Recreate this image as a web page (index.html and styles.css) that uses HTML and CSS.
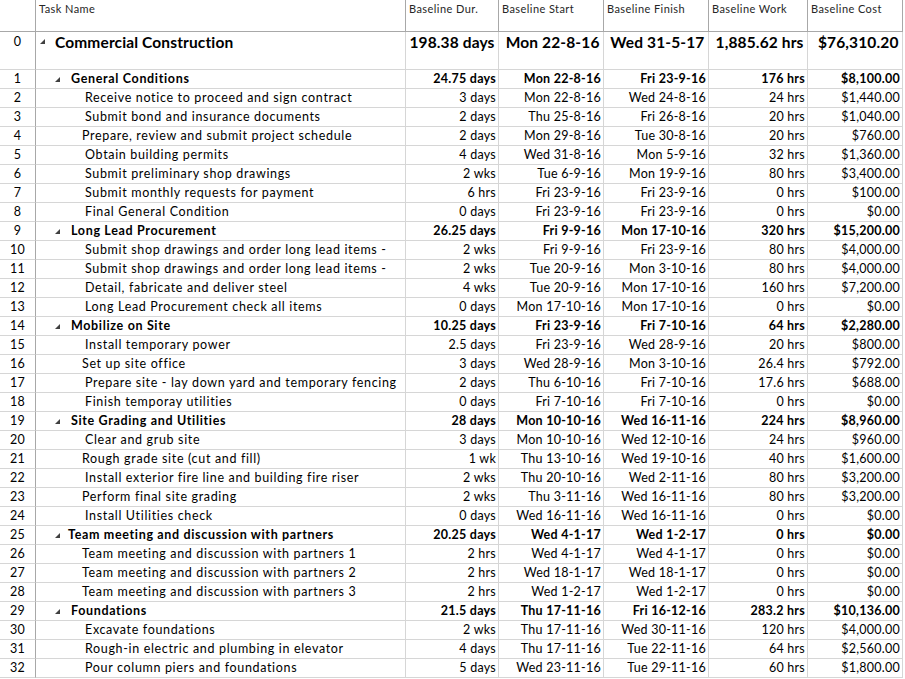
FILE: index.html
```html
<!DOCTYPE html>
<html>
<head>
<meta charset="utf-8">
<link rel="stylesheet" href="styles.css">
</head>
<body>
<div class="sheet">
  <div class="row head">
    <div class="cell c-id"></div>
    <div class="cell c-name">Task Name</div>
    <div class="cell c-dur">Baseline Dur.</div>
    <div class="cell c-start">Baseline Start</div>
    <div class="cell c-fin">Baseline Finish</div>
    <div class="cell c-work">Baseline Work</div>
    <div class="cell c-cost">Baseline Cost</div>
  </div>

  <div class="row top">
    <div class="cell c-id">0</div>
    <div class="cell c-name l0"><svg class="tri" width="5" height="5" viewBox="0 0 5 5"><path d="M5 0V5H0Z"/></svg><span>Commercial Construction</span></div>
    <div class="cell c-dur num">198.38 days</div>
    <div class="cell c-start num">Mon 22-8-16</div>
    <div class="cell c-fin num">Wed 31-5-17</div>
    <div class="cell c-work num">1,885.62 hrs</div>
    <div class="cell c-cost num">$76,310.20</div>
  </div>

  <div class="row sum">
    <div class="cell c-id">1</div>
    <div class="cell c-name l1"><svg class="tri" width="5" height="5" viewBox="0 0 5 5"><path d="M5 0V5H0Z"/></svg><span>General Conditions</span></div>
    <div class="cell c-dur num">24.75 days</div>
    <div class="cell c-start num">Mon 22-8-16</div>
    <div class="cell c-fin num">Fri 23-9-16</div>
    <div class="cell c-work num">176 hrs</div>
    <div class="cell c-cost num">$8,100.00</div>
  </div>
  <div class="row">
    <div class="cell c-id">2</div>
    <div class="cell c-name l2">Receive notice to proceed and sign contract</div>
    <div class="cell c-dur num">3 days</div>
    <div class="cell c-start num">Mon 22-8-16</div>
    <div class="cell c-fin num">Wed 24-8-16</div>
    <div class="cell c-work num">24 hrs</div>
    <div class="cell c-cost num">$1,440.00</div>
  </div>
  <div class="row">
    <div class="cell c-id">3</div>
    <div class="cell c-name l2">Submit bond and insurance documents</div>
    <div class="cell c-dur num">2 days</div>
    <div class="cell c-start num">Thu 25-8-16</div>
    <div class="cell c-fin num">Fri 26-8-16</div>
    <div class="cell c-work num">20 hrs</div>
    <div class="cell c-cost num">$1,040.00</div>
  </div>
  <div class="row">
    <div class="cell c-id">4</div>
    <div class="cell c-name l2n">Prepare, review and submit project schedule</div>
    <div class="cell c-dur num">2 days</div>
    <div class="cell c-start num">Mon 29-8-16</div>
    <div class="cell c-fin num">Tue 30-8-16</div>
    <div class="cell c-work num">20 hrs</div>
    <div class="cell c-cost num">$760.00</div>
  </div>
  <div class="row">
    <div class="cell c-id">5</div>
    <div class="cell c-name l2">Obtain building permits</div>
    <div class="cell c-dur num">4 days</div>
    <div class="cell c-start num">Wed 31-8-16</div>
    <div class="cell c-fin num">Mon 5-9-16</div>
    <div class="cell c-work num">32 hrs</div>
    <div class="cell c-cost num">$1,360.00</div>
  </div>
  <div class="row">
    <div class="cell c-id">6</div>
    <div class="cell c-name l2">Submit preliminary shop drawings</div>
    <div class="cell c-dur num">2 wks</div>
    <div class="cell c-start num">Tue 6-9-16</div>
    <div class="cell c-fin num">Mon 19-9-16</div>
    <div class="cell c-work num">80 hrs</div>
    <div class="cell c-cost num">$3,400.00</div>
  </div>
  <div class="row">
    <div class="cell c-id">7</div>
    <div class="cell c-name l2">Submit monthly requests for payment</div>
    <div class="cell c-dur num">6 hrs</div>
    <div class="cell c-start num">Fri 23-9-16</div>
    <div class="cell c-fin num">Fri 23-9-16</div>
    <div class="cell c-work num">0 hrs</div>
    <div class="cell c-cost num">$100.00</div>
  </div>
  <div class="row">
    <div class="cell c-id">8</div>
    <div class="cell c-name l2">Final General Condition</div>
    <div class="cell c-dur num">0 days</div>
    <div class="cell c-start num">Fri 23-9-16</div>
    <div class="cell c-fin num">Fri 23-9-16</div>
    <div class="cell c-work num">0 hrs</div>
    <div class="cell c-cost num">$0.00</div>
  </div>

  <div class="row sum">
    <div class="cell c-id">9</div>
    <div class="cell c-name l1"><svg class="tri" width="5" height="5" viewBox="0 0 5 5"><path d="M5 0V5H0Z"/></svg><span>Long Lead Procurement</span></div>
    <div class="cell c-dur num">26.25 days</div>
    <div class="cell c-start num">Fri 9-9-16</div>
    <div class="cell c-fin num">Mon 17-10-16</div>
    <div class="cell c-work num">320 hrs</div>
    <div class="cell c-cost num">$15,200.00</div>
  </div>
  <div class="row">
    <div class="cell c-id">10</div>
    <div class="cell c-name l2">Submit shop drawings and order long lead items -</div>
    <div class="cell c-dur num">2 wks</div>
    <div class="cell c-start num">Fri 9-9-16</div>
    <div class="cell c-fin num">Fri 23-9-16</div>
    <div class="cell c-work num">80 hrs</div>
    <div class="cell c-cost num">$4,000.00</div>
  </div>
  <div class="row">
    <div class="cell c-id">11</div>
    <div class="cell c-name l2">Submit shop drawings and order long lead items -</div>
    <div class="cell c-dur num">2 wks</div>
    <div class="cell c-start num">Tue 20-9-16</div>
    <div class="cell c-fin num">Mon 3-10-16</div>
    <div class="cell c-work num">80 hrs</div>
    <div class="cell c-cost num">$4,000.00</div>
  </div>
  <div class="row">
    <div class="cell c-id">12</div>
    <div class="cell c-name l2">Detail, fabricate and deliver steel</div>
    <div class="cell c-dur num">4 wks</div>
    <div class="cell c-start num">Tue 20-9-16</div>
    <div class="cell c-fin num">Mon 17-10-16</div>
    <div class="cell c-work num">160 hrs</div>
    <div class="cell c-cost num">$7,200.00</div>
  </div>
  <div class="row">
    <div class="cell c-id">13</div>
    <div class="cell c-name l2">Long Lead Procurement check all items</div>
    <div class="cell c-dur num">0 days</div>
    <div class="cell c-start num">Mon 17-10-16</div>
    <div class="cell c-fin num">Mon 17-10-16</div>
    <div class="cell c-work num">0 hrs</div>
    <div class="cell c-cost num">$0.00</div>
  </div>

  <div class="row sum">
    <div class="cell c-id">14</div>
    <div class="cell c-name l1"><svg class="tri" width="5" height="5" viewBox="0 0 5 5"><path d="M5 0V5H0Z"/></svg><span>Mobilize on Site</span></div>
    <div class="cell c-dur num">10.25 days</div>
    <div class="cell c-start num">Fri 23-9-16</div>
    <div class="cell c-fin num">Fri 7-10-16</div>
    <div class="cell c-work num">64 hrs</div>
    <div class="cell c-cost num">$2,280.00</div>
  </div>
  <div class="row">
    <div class="cell c-id">15</div>
    <div class="cell c-name l2">Install temporary power</div>
    <div class="cell c-dur num">2.5 days</div>
    <div class="cell c-start num">Fri 23-9-16</div>
    <div class="cell c-fin num">Wed 28-9-16</div>
    <div class="cell c-work num">20 hrs</div>
    <div class="cell c-cost num">$800.00</div>
  </div>
  <div class="row">
    <div class="cell c-id">16</div>
    <div class="cell c-name l2n">Set up site office</div>
    <div class="cell c-dur num">3 days</div>
    <div class="cell c-start num">Wed 28-9-16</div>
    <div class="cell c-fin num">Mon 3-10-16</div>
    <div class="cell c-work num">26.4 hrs</div>
    <div class="cell c-cost num">$792.00</div>
  </div>
  <div class="row">
    <div class="cell c-id">17</div>
    <div class="cell c-name l2">Prepare site - lay down yard and temporary fencing</div>
    <div class="cell c-dur num">2 days</div>
    <div class="cell c-start num">Thu 6-10-16</div>
    <div class="cell c-fin num">Fri 7-10-16</div>
    <div class="cell c-work num">17.6 hrs</div>
    <div class="cell c-cost num">$688.00</div>
  </div>
  <div class="row">
    <div class="cell c-id">18</div>
    <div class="cell c-name l2">Finish temporay utilities</div>
    <div class="cell c-dur num">0 days</div>
    <div class="cell c-start num">Fri 7-10-16</div>
    <div class="cell c-fin num">Fri 7-10-16</div>
    <div class="cell c-work num">0 hrs</div>
    <div class="cell c-cost num">$0.00</div>
  </div>

  <div class="row sum">
    <div class="cell c-id">19</div>
    <div class="cell c-name l1"><svg class="tri" width="5" height="5" viewBox="0 0 5 5"><path d="M5 0V5H0Z"/></svg><span>Site Grading and Utilities</span></div>
    <div class="cell c-dur num">28 days</div>
    <div class="cell c-start num">Mon 10-10-16</div>
    <div class="cell c-fin num">Wed 16-11-16</div>
    <div class="cell c-work num">224 hrs</div>
    <div class="cell c-cost num">$8,960.00</div>
  </div>
  <div class="row">
    <div class="cell c-id">20</div>
    <div class="cell c-name l2">Clear and grub site</div>
    <div class="cell c-dur num">3 days</div>
    <div class="cell c-start num">Mon 10-10-16</div>
    <div class="cell c-fin num">Wed 12-10-16</div>
    <div class="cell c-work num">24 hrs</div>
    <div class="cell c-cost num">$960.00</div>
  </div>
  <div class="row">
    <div class="cell c-id">21</div>
    <div class="cell c-name l2n">Rough grade site (cut and fill)</div>
    <div class="cell c-dur num">1 wk</div>
    <div class="cell c-start num">Thu 13-10-16</div>
    <div class="cell c-fin num">Wed 19-10-16</div>
    <div class="cell c-work num">40 hrs</div>
    <div class="cell c-cost num">$1,600.00</div>
  </div>
  <div class="row">
    <div class="cell c-id">22</div>
    <div class="cell c-name l2">Install exterior fire line and building fire riser</div>
    <div class="cell c-dur num">2 wks</div>
    <div class="cell c-start num">Thu 20-10-16</div>
    <div class="cell c-fin num">Wed 2-11-16</div>
    <div class="cell c-work num">80 hrs</div>
    <div class="cell c-cost num">$3,200.00</div>
  </div>
  <div class="row">
    <div class="cell c-id">23</div>
    <div class="cell c-name l2n">Perform final site grading</div>
    <div class="cell c-dur num">2 wks</div>
    <div class="cell c-start num">Thu 3-11-16</div>
    <div class="cell c-fin num">Wed 16-11-16</div>
    <div class="cell c-work num">80 hrs</div>
    <div class="cell c-cost num">$3,200.00</div>
  </div>
  <div class="row">
    <div class="cell c-id">24</div>
    <div class="cell c-name l2">Install Utilities check</div>
    <div class="cell c-dur num">0 days</div>
    <div class="cell c-start num">Wed 16-11-16</div>
    <div class="cell c-fin num">Wed 16-11-16</div>
    <div class="cell c-work num">0 hrs</div>
    <div class="cell c-cost num">$0.00</div>
  </div>

  <div class="row sum">
    <div class="cell c-id">25</div>
    <div class="cell c-name l1 tight"><svg class="tri" width="5" height="5" viewBox="0 0 5 5"><path d="M5 0V5H0Z"/></svg><span>Team meeting and discussion with partners</span></div>
    <div class="cell c-dur num">20.25 days</div>
    <div class="cell c-start num">Wed 4-1-17</div>
    <div class="cell c-fin num">Wed 1-2-17</div>
    <div class="cell c-work num">0 hrs</div>
    <div class="cell c-cost num">$0.00</div>
  </div>
  <div class="row">
    <div class="cell c-id">26</div>
    <div class="cell c-name l2n">Team meeting and discussion with partners 1</div>
    <div class="cell c-dur num">2 hrs</div>
    <div class="cell c-start num">Wed 4-1-17</div>
    <div class="cell c-fin num">Wed 4-1-17</div>
    <div class="cell c-work num">0 hrs</div>
    <div class="cell c-cost num">$0.00</div>
  </div>
  <div class="row">
    <div class="cell c-id">27</div>
    <div class="cell c-name l2n">Team meeting and discussion with partners 2</div>
    <div class="cell c-dur num">2 hrs</div>
    <div class="cell c-start num">Wed 18-1-17</div>
    <div class="cell c-fin num">Wed 18-1-17</div>
    <div class="cell c-work num">0 hrs</div>
    <div class="cell c-cost num">$0.00</div>
  </div>
  <div class="row">
    <div class="cell c-id">28</div>
    <div class="cell c-name l2n">Team meeting and discussion with partners 3</div>
    <div class="cell c-dur num">2 hrs</div>
    <div class="cell c-start num">Wed 1-2-17</div>
    <div class="cell c-fin num">Wed 1-2-17</div>
    <div class="cell c-work num">0 hrs</div>
    <div class="cell c-cost num">$0.00</div>
  </div>

  <div class="row sum">
    <div class="cell c-id">29</div>
    <div class="cell c-name l1"><svg class="tri" width="5" height="5" viewBox="0 0 5 5"><path d="M5 0V5H0Z"/></svg><span>Foundations</span></div>
    <div class="cell c-dur num">21.5 days</div>
    <div class="cell c-start num">Thu 17-11-16</div>
    <div class="cell c-fin num">Fri 16-12-16</div>
    <div class="cell c-work num">283.2 hrs</div>
    <div class="cell c-cost num">$10,136.00</div>
  </div>
  <div class="row">
    <div class="cell c-id">30</div>
    <div class="cell c-name l2">Excavate foundations</div>
    <div class="cell c-dur num">2 wks</div>
    <div class="cell c-start num">Thu 17-11-16</div>
    <div class="cell c-fin num">Wed 30-11-16</div>
    <div class="cell c-work num">120 hrs</div>
    <div class="cell c-cost num">$4,000.00</div>
  </div>
  <div class="row">
    <div class="cell c-id">31</div>
    <div class="cell c-name l2">Rough-in electric and plumbing in elevator</div>
    <div class="cell c-dur num">4 days</div>
    <div class="cell c-start num">Thu 17-11-16</div>
    <div class="cell c-fin num">Tue 22-11-16</div>
    <div class="cell c-work num">64 hrs</div>
    <div class="cell c-cost num">$2,560.00</div>
  </div>
  <div class="row">
    <div class="cell c-id">32</div>
    <div class="cell c-name l2">Pour column piers and foundations</div>
    <div class="cell c-dur num">5 days</div>
    <div class="cell c-start num">Wed 23-11-16</div>
    <div class="cell c-fin num">Tue 29-11-16</div>
    <div class="cell c-work num">60 hrs</div>
    <div class="cell c-cost num">$1,800.00</div>
  </div>
</div>
</body>
</html>
```

FILE: styles.css
```css
html, body {
  margin: 0;
  padding: 0;
  background: #ffffff;
}

body {
  font-family: Lato, "Open Sans", sans-serif;
  color: #000000;
  overflow: hidden;
}

.sheet {
  width: 903px;
}

.row {
  display: flex;
  height: 19px;
}

.cell {
  box-sizing: border-box;
  height: 100%;
  border-right: 1px solid #d6d6d6;
  border-bottom: 1px solid #d6d6d6;
  font-size: 12.5px;
  letter-spacing: 0.66px;
  line-height: 18px;
  white-space: nowrap;
  overflow: hidden;
}

.c-id {
  width: 36px;
  text-align: center;
  letter-spacing: 0.3px;
  border-right-color: #a8a8a8;
}

.c-name {
  width: 370px;
  display: flex;
  align-items: center;
}

.c-dur { width: 93px; }
.c-start { width: 105px; }
.c-fin { width: 105px; }
.c-work { width: 99px; }
.c-cost { width: 95px; }

.num {
  text-align: right;
  letter-spacing: 0.25px;
  padding-right: 2px;
}

/* header */
.head {
  height: 32px;
}

.head .cell {
  border-right-color: #a8a8a8;
  border-bottom-color: #a8a8a8;
  font-size: 11px;
  letter-spacing: 0.43px;
  line-height: 14px;
  color: #262626;
  padding: 2px 0 0 3px;
  align-items: flex-start;
}

/* project summary row */
.top {
  height: 38px;
}

.top .cell {
  font-size: 15.5px;
  font-weight: 700;
  letter-spacing: 0.13px;
  line-height: 20px;
}

.top .num {
  padding-right: 3.5px;
}

.top .c-id {
  font-size: 12.5px;
  font-weight: 400;
  letter-spacing: 0.3px;
}

.top .c-name {
  align-items: flex-start;
}

.top .tri {
  margin-top: 7px;
}

/* summary rows */
.sum .cell {
  font-weight: 700;
}

.sum .c-id {
  font-weight: 400;
}

.tri {
  flex: none;
  fill: #404040;
}

.l0 {
  padding-left: 4px;
}

.l0 .tri {
  margin-right: 10px;
}

.l1 {
  padding-left: 19px;
}

.l1 .tri {
  margin-right: 11px;
}

.l1.tight .tri {
  margin-right: 8px;
}

.l2 {
  padding-left: 49px;
}

.l2n {
  padding-left: 46px;
}
```
